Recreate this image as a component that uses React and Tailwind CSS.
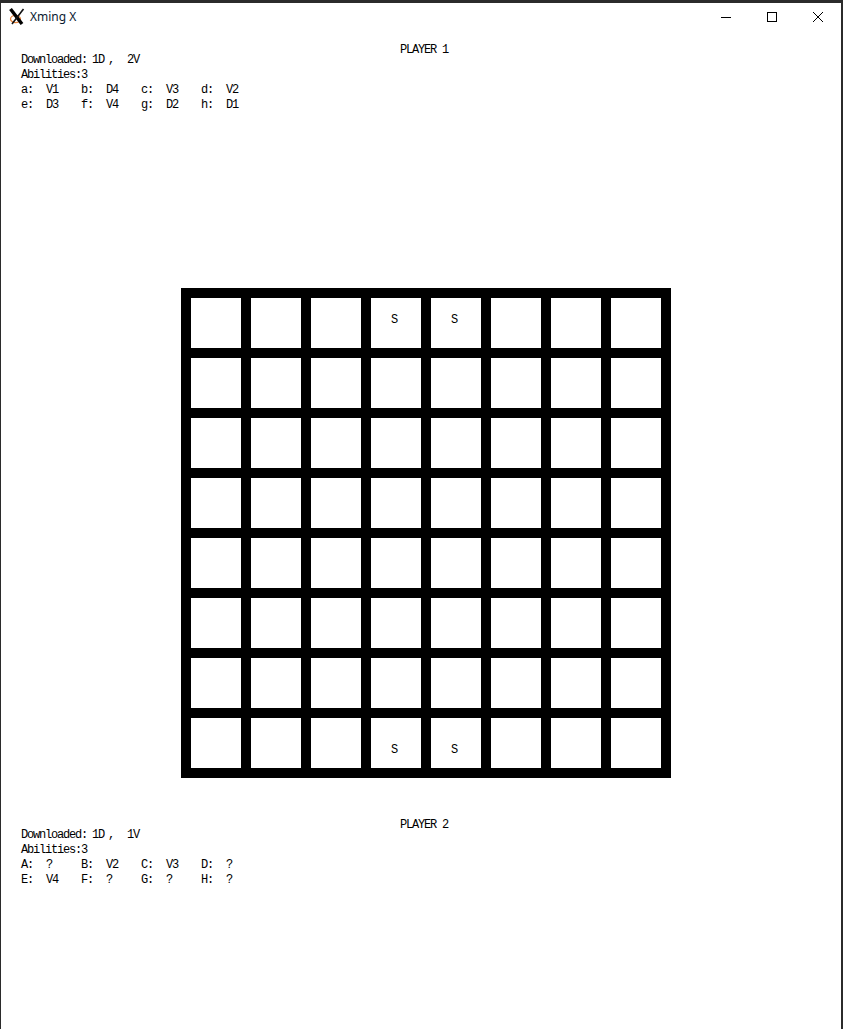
const mono = "font-['Liberation_Mono',monospace] text-[12px] leading-[15px] tracking-[-1.2px] text-black whitespace-pre";

const player1 = {
  name: "PLAYER 1",
  downloaded: ["1D", "2V"],
  abilities: 3,
  rows: [
    [["a", "V1"], ["b", "D4"], ["c", "V3"], ["d", "V2"]],
    [["e", "D3"], ["f", "V4"], ["g", "D2"], ["h", "D1"]],
  ],
};

const player2 = {
  name: "PLAYER 2",
  downloaded: ["1D", "1V"],
  abilities: 3,
  rows: [
    [["A", "?"], ["B", "V2"], ["C", "V3"], ["D", "?"]],
    [["E", "V4"], ["F", "?"], ["G", "?"], ["H", "?"]],
  ],
};

const XmingLogo = () => (
  <svg width="16" height="17" viewBox="0 0 16 17" fill="none">
    <ellipse cx="6.5" cy="11" rx="5" ry="3.6" stroke="#e8833a" strokeWidth="1.3" />
    <path d="M1.5 1 L13 16" stroke="#000" strokeWidth="3.4" />
    <path d="M14.5 1 L3 16" stroke="#111" strokeWidth="1.6" />
  </svg>
);

const PlayerPanel = ({ player }) => (
  <div className={mono}>
    <div className="-mb-[5px] pl-[399px]">{player.name}</div>
    <div className="flex pl-5">
      <span className="w-[71px]">Downloaded:</span>
      <span className="w-[16px]">{player.downloaded[0]}</span>
      <span className="w-[19px]">,</span>
      <span>{player.downloaded[1]}</span>
    </div>
    <div className="pl-5">Abilities:{player.abilities}</div>
    {player.rows.map((row, i) => (
      <div key={i} className="flex pl-5">
        {row.map(([key, value]) => (
          <div key={key} className="flex w-[60px]">
            <span className="w-[25px]">{key}:</span>
            <span>{value}</span>
          </div>
        ))}
      </div>
    ))}
  </div>
);

const Cell = ({ index }) => {
  const hasPiece = index === 3 || index === 4 || index === 59 || index === 60;
  return (
    <div className={`flex h-[50px] items-center justify-center bg-white pr-1 ${index < 32 ? "pb-[6px]" : "pt-[14px]"} ${mono}`}>
      {hasPiece ? "S" : ""}
    </div>
  );
};

const Board = () => (
  <div className="ml-[180px] grid w-[490px] grid-cols-[repeat(8,50px)] gap-[10px] bg-black p-[10px]">
    {Array.from({ length: 64 }, (_, i) => (
      <Cell key={i} index={i} />
    ))}
  </div>
);

const WindowButtons = () => (
  <div className="flex items-center">
    <div className="flex w-[46px] justify-center">
      <svg width="10" height="10" viewBox="0 0 10 10"><path d="M0 5.5H10" stroke="#000" /></svg>
    </div>
    <div className="flex w-[46px] justify-center">
      <svg width="10" height="10" viewBox="0 0 10 10"><rect x="0.5" y="0.5" width="9" height="9" fill="none" stroke="#000" /></svg>
    </div>
    <div className="flex w-[46px] justify-center">
      <svg width="10" height="10" viewBox="0 0 10 10"><path d="M0 0L10 10M10 0L0 10" stroke="#000" /></svg>
    </div>
  </div>
);

export default function App() {
  return (
    <div className="flex h-[1029px] w-[843px] flex-col overflow-hidden border-t-[3px] border-r-2 border-l border-t-[#2b2b2b] border-r-[#2b2b2b] border-l-[#2b2b2b] bg-white">
      <div className="flex h-[27px] shrink-0 items-center justify-between">
        <div className="flex items-center gap-[5px] pl-2 font-['Noto_Sans',sans-serif] text-[12px] text-[#0a1a30]">
          <XmingLogo />
          <span>Xming X</span>
        </div>
        <WindowButtons />
      </div>
      <div className="mt-[13px]">
        <PlayerPanel player={player1} />
      </div>
      <div className="mt-[175px]">
        <Board />
      </div>
      <div className="mt-10">
        <PlayerPanel player={player2} />
      </div>
    </div>
  );
}
